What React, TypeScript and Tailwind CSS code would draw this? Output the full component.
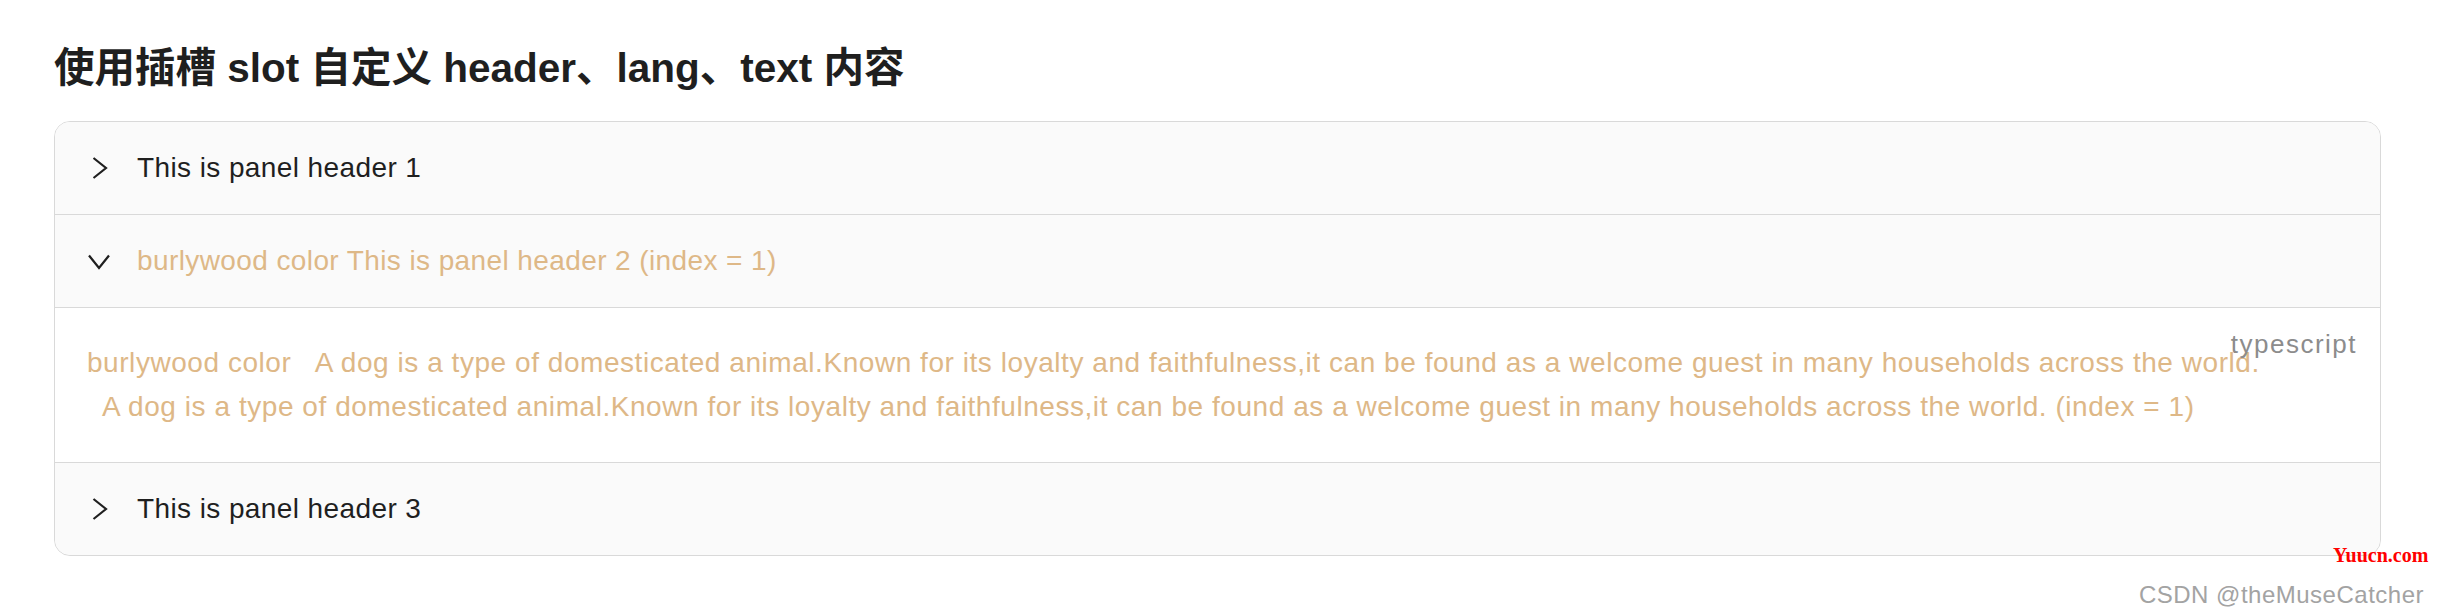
import React from "react";

const TEXT =
  "  A dog is a type of domesticated animal.Known for its loyalty and faithfulness,it can be found as a welcome guest in many households across the world.\n  A dog is a type of domesticated animal.Known for its loyalty and faithfulness,it can be found as a welcome guest in many households across the world.";

function Chevron({ open }: { open?: boolean }) {
  return (
    <span className="mr-[26px] flex h-[24px] w-[24px] shrink-0 items-center justify-center">
      <svg
        width="24"
        height="24"
        viewBox="0 0 24 24"
        className={open ? "rotate-90" : ""}
        fill="none"
        stroke="#1f1f1f"
        strokeWidth="2.2"
        strokeLinecap="butt"
        strokeLinejoin="miter"
      >
        <polyline points="6.5,2 19,12 6.5,22" />
      </svg>
    </span>
  );
}

function Header({
  children,
  open,
  color,
  last,
}: {
  children: React.ReactNode;
  open?: boolean;
  color?: string;
  last?: boolean;
}) {
  return (
    <div
      className={`flex items-center bg-[#fafafa] py-[24px] pl-[32px] pr-[32px] text-[28px] leading-[44px] tracking-[0.4px] ${
        last ? "rounded-b-[15px]" : "border-b border-[#d9d9d9]"
      } ${color === "burly" ? "text-[#deb887]" : "text-[#1f1f1f]"}`}
    >
      <Chevron open={open} />
      <span className="whitespace-nowrap">{children}</span>
    </div>
  );
}

export default function App() {
  return (
    <div
      className="relative h-[612px] w-full overflow-hidden bg-white pl-[54px] pr-[61px] pt-[44px]"
      style={{ fontFamily: '"Liberation Sans", "Noto Sans CJK SC", sans-serif' }}
    >
      <h3 className="text-[40.5px] font-bold leading-[48px] text-[#1f1f1f]">
        使用插槽 slot 自定义 header、lang、text 内容
      </h3>
      <div className="mt-[29px] overflow-hidden rounded-[16px] border border-[#d9d9d9]">
        <Header>This is panel header 1</Header>
        <Header open color="burly">
          burlywood color This is panel header 2 (index = 1)
        </Header>
        <div className="relative border-b border-[#d9d9d9] bg-white px-[32px] py-[33px] text-[28px] leading-[44px] tracking-[0.55px] text-[#deb887]">
          <div className="whitespace-pre">{"burlywood color " + TEXT + " (index = 1)"}</div>
          <span className="absolute right-[23px] top-[23px] text-[26px] leading-[26px] tracking-[1.5px] text-[#8c8c8c]">
            typescript
          </span>
        </div>
        <Header last>This is panel header 3</Header>
      </div>
      <span
        className="absolute left-[2333px] top-[543px] text-[20px] font-bold leading-[24px] text-[#ff0000]"
        style={{ fontFamily: '"Liberation Serif", serif' }}
      >
        Yuucn.com
      </span>
      <span className="absolute right-[18px] top-[581px] text-[24px] leading-[28px] tracking-[0.5px] text-[#a3a3a3]">
        CSDN @theMuseCatcher
      </span>
    </div>
  );
}
